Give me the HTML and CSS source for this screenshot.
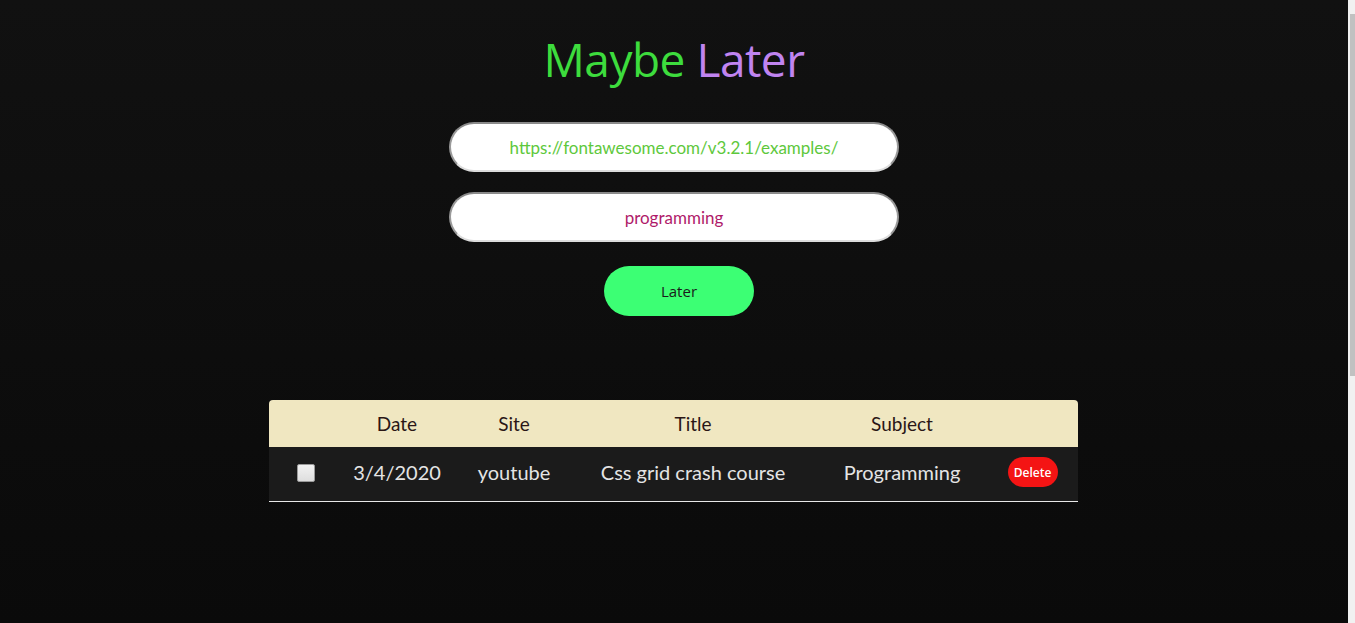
FILE: index.html
```html
<!DOCTYPE html>
<html lang="en">
<head>
<meta charset="utf-8">
<title>Maybe Later</title>
<link rel="stylesheet" href="styles.css">
</head>
<body>
<main class="page">
  <h1 class="title"><span class="maybe">Maybe</span> <span class="later">Later</span></h1>
  <form class="form">
    <input class="field field-url" type="text" value="https://fontawesome.com/v3.2.1/examples/">
    <input class="field field-subject" type="text" value="programming">
    <button class="later-btn" type="button">Later</button>
  </form>
  <table class="list">
    <colgroup>
      <col class="c-check"><col class="c-date"><col class="c-site"><col class="c-title"><col class="c-subject"><col class="c-del">
    </colgroup>
    <thead>
      <tr><th></th><th>Date</th><th>Site</th><th>Title</th><th>Subject</th><th></th></tr>
    </thead>
    <tbody>
      <tr>
        <td><span class="check"></span></td>
        <td>3/4/2020</td>
        <td>youtube</td>
        <td>Css grid crash course</td>
        <td>Programming</td>
        <td><button class="del-btn" type="button">Delete</button></td>
      </tr>
    </tbody>
  </table>
</main>
<div class="scrollbar"><div class="thumb"></div></div>
</body>
</html>
```
FILE: styles.css
```css
html {
  background: linear-gradient(#111111, #0a0a0a);
  height: 100%;
  overflow: hidden;
}
body {
  margin: 0;
  height: 100%;
  padding-right: 7px;
  font-family: "Lato", "Open Sans", sans-serif;
  color: #e6e6e6;
}
.scrollbar {
  position: fixed;
  top: 0;
  right: 0;
  bottom: 0;
  width: 7px;
  background: #f1f1f1;
}
.thumb {
  margin: 14px 0 0 2px;
  height: 362px;
  background: #c1c1c1;
}
.page {
  display: flex;
  flex-direction: column;
  align-items: center;
  padding-top: 28px;
}
.title {
  margin: 0;
  font-family: "Open Sans", sans-serif;
  font-weight: 400;
  font-size: 46px;
  line-height: 62px;
  letter-spacing: -0.5px;
}
.maybe { color: #3ddc3d; }
.later { color: #c084f0; }
.form {
  display: flex;
  flex-direction: column;
  align-items: center;
  margin-top: 32px;
}
.field {
  box-sizing: border-box;
  width: 450px;
  height: 50px;
  border-radius: 25px;
  border: 2px solid #9a9a9a;
  border-top-color: #8a8a8a;
  border-bottom-color: #dcdcdc;
  background: #ffffff;
  text-align: center;
  font-family: "Lato", sans-serif;
  font-size: 17px;
  outline: none;
}
.field + .field { margin-top: 20px; }
.field-url { color: #5ec83c; }
.field-subject { color: #b01a6a; }
.later-btn {
  margin-top: 24px;
  width: 150px;
  height: 50px;
  border: none;
  border-radius: 25px;
  background: #3cff74;
  color: #1a1a1a;
  font-family: "Open Sans", sans-serif;
  font-size: 15px;
  margin-left: 10px;
}
.list {
  margin-top: 84px;
  margin-right: 1px;
  width: 809px;
  border-collapse: collapse;
  table-layout: fixed;
}
.c-check { width: 74px; }
.c-date { width: 108px; }
.c-site { width: 126px; }
.c-title { width: 232px; }
.c-subject { width: 186px; }
.c-del { width: 83px; }
.list thead tr { background: #f0e7c1; }
.list th {
  height: 47px;
  padding: 0;
  font-weight: 400;
  font-size: 19px;
  color: #2a1616;
  text-align: center;
}
.list th:first-child { border-top-left-radius: 4px; }
.list th:last-child { border-top-right-radius: 4px; }
.list tbody tr { background: #1b1b1b; border-bottom: 1px solid #e8e8e8; }
.list td {
  height: 50px;
  padding: 0 0 4px;
  font-size: 20px;
  color: #e4e4e4;
  text-align: center;
}
.check {
  display: inline-block;
  box-sizing: border-box;
  width: 18px;
  height: 18px;
  vertical-align: -2px;
  background: linear-gradient(#f2f2f2, #dedede);
  border: 1px solid #9a9a9a;
  border-radius: 2px;
}
.del-btn {
  width: 50px;
  height: 30px;
  border: none;
  border-radius: 15px;
  background: #f41414;
  color: #ffffff;
  font-family: "Open Sans", sans-serif;
  font-weight: 600;
  font-size: 12px;
  padding: 0;
  margin-right: 8px;
  vertical-align: middle;
}
```
